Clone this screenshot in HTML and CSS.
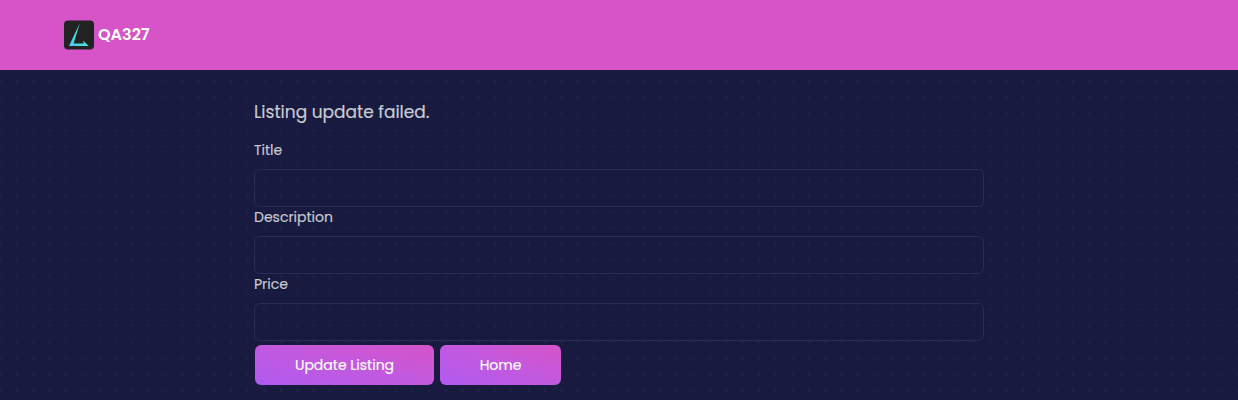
FILE: index.html
```html
<!DOCTYPE html>
<html lang="en">
<head>
<meta charset="utf-8">
<title>QA327</title>
<link rel="stylesheet" href="styles.css">
</head>
<body>
<header class="navbar">
  <a class="brand">
    <svg class="logo" viewBox="0 0 30 30">
      <defs><linearGradient id="g" x1="0" y1="1" x2="1" y2="0"><stop offset="0" stop-color="#4cc4ff"/><stop offset=".5" stop-color="#45e6d0"/><stop offset="1" stop-color="#3fd79b"/></linearGradient></defs>
      <rect y="0.5" width="30" height="29" rx="4" fill="#222"/>
      <path d="M15.9 3 5 26H24.8L19 20.4 19.8 23.6H9.6Z" fill="url(#g)"/>
    </svg>
    <span class="brand-name">QA327</span>
  </a>
</header>
<main class="page">
  <form class="form">
    <h4 class="message">Listing update failed.</h4>
    <label class="label">Title</label>
    <input class="field" type="text">
    <label class="label">Description</label>
    <input class="field" type="text">
    <label class="label">Price</label>
    <input class="field" type="text">
    <div class="actions">
      <button class="btn btn-update" type="button">Update Listing</button>
      <button class="btn btn-home" type="button">Home</button>
    </div>
  </form>
</main>
</body>
</html>
```
FILE: styles.css
```css
* { box-sizing: border-box; }
body {
  margin: 0;
  height: 400px;
  overflow: hidden;
  background: #181a40;
  font-family: Poppins, Inter, sans-serif;
  font-size: 14px;
  color: #cacbd3;
}
.navbar {
  height: 70px;
  padding: 0 64px;
  display: flex;
  align-items: center;
  background: #d653c8;
}
.brand { display: flex; align-items: center; gap: 4px; color: #fff; }
.logo { width: 30px; height: 30px; display: block; }
.brand-name { font-size: 16px; line-height: 24px; font-weight: 600; padding-bottom: 1px; }
.page {
  height: 330px;
  background-image: radial-gradient(circle at 8.25px 8.14px, #20264a 0.8px, transparent 1.3px);
  background-size: 16.5px 16.28px;
  background-position: -8px 3.5px;
}
.form { width: 730px; margin: 0 auto; padding-top: 30px; display: flex; flex-direction: column; }
.message { margin: 0 0 15px; height: 24px; line-height: 24px; font-size: 17px; font-weight: 400; }
.label { height: 30px; line-height: 22px; }
.field {
  width: 100%;
  height: 38px;
  margin-bottom: -1px;
  padding: 8px 18px;
  border: 1px solid #252e53;
  border-radius: 6px;
  background: transparent;
  color: #fff;
}
.message, .label, .btn { -webkit-text-stroke: 0.15px; }
.actions { display: flex; gap: 6px; padding: 5px 1px 0; }
.btn {
  height: 40px;
  padding: 0;
  border: 0;
  border-radius: 6px;
  background: linear-gradient(to bottom left, #d653c8, #c259df 50%, #b05af0);
  color: #fff;
  font: inherit;
}
.btn-update { width: 179px; }
.btn-home { width: 121px; }
```
